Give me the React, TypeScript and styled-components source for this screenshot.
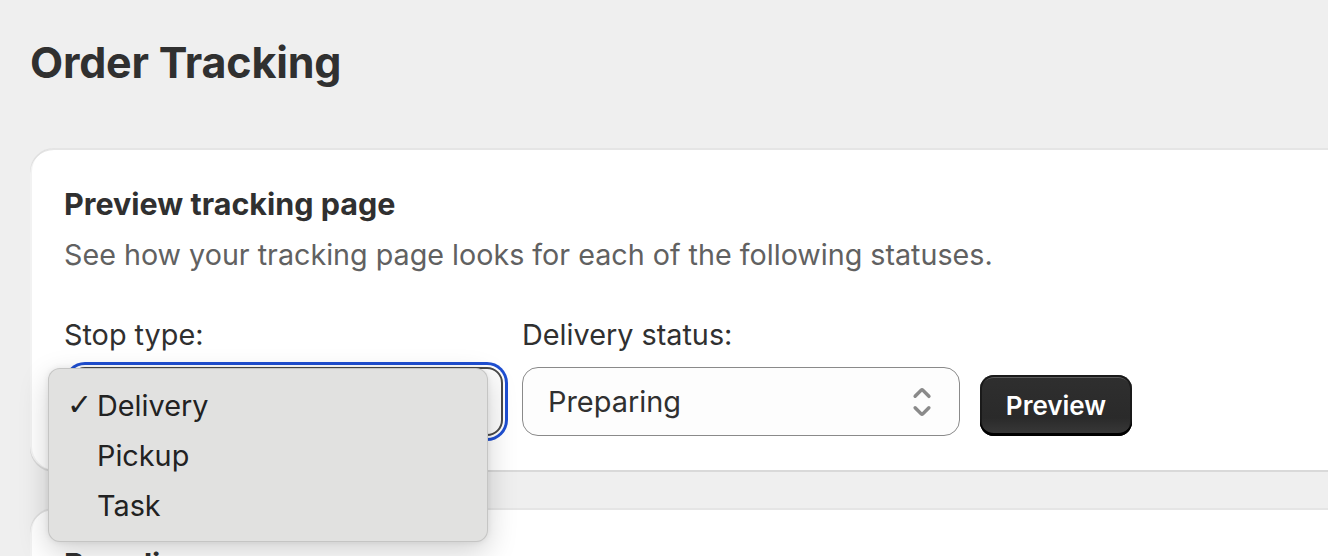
import styled, { createGlobalStyle } from "styled-components";

const GlobalStyle = createGlobalStyle`
  html, body {
    margin: 0;
    padding: 0;
    background: #efefef;
    overflow: hidden;
  }

  body {
    font-family: Inter, "Liberation Sans", sans-serif;
    color: #303030;
  }
`;

function SelectIcon() {
  return (
    <svg width="46" height="46" viewBox="0 0 20 20" fill="#8a8a8a">
      <path d="M10.884 4.323a1.25 1.25 0 0 0-1.768 0l-2.646 2.647a.75.75 0 0 0 1.06 1.06l2.47-2.47 2.47 2.47a.75.75 0 1 0 1.06-1.06l-2.646-2.647Z" />
      <path d="m13.53 13.03-2.646 2.647a1.25 1.25 0 0 1-1.768 0l-2.646-2.647a.75.75 0 0 1 1.06-1.06l2.47 2.47 2.47-2.47a.75.75 0 0 1 1.06 1.06Z" />
    </svg>
  );
}

function App() {
  return (
    <Page>
      <GlobalStyle />
      <Title>Order Tracking</Title>

      <Card>
        <CardTitle>Preview tracking page</CardTitle>
        <CardText>
          See how your tracking page looks for each of the following statuses.
        </CardText>

        <FieldRow>
          <Field $width={444}>
            <Label>Stop type:</Label>
            <SelectWrap>
              <SelectBox $focused>
                <span>Delivery</span>
                <SelectIcon />
              </SelectBox>

              <Menu>
                <MenuItem>
                  <Check>✓</Check>
                  Delivery
                </MenuItem>
                <MenuItem>
                  <Check />
                  Pickup
                </MenuItem>
                <MenuItem>
                  <Check />
                  Task
                </MenuItem>
              </Menu>
            </SelectWrap>
          </Field>

          <Field $width={438}>
            <Label>Delivery status:</Label>
            <SelectWrap>
              <SelectBox>
                <span>Preparing</span>
                <SelectIcon />
              </SelectBox>
            </SelectWrap>
          </Field>

          <PrimaryButton>Preview</PrimaryButton>
        </FieldRow>
      </Card>

      <Card $gap>
        <CardTitle>Branding</CardTitle>
      </Card>
    </Page>
  );
}

export default App;

const Page = styled.div`
  width: 1420px;
  padding: 34px 0 40px 30px;
`;

const Title = styled.h1`
  margin: 0 0 58px;
  font-size: 43px;
  line-height: 56px;
  font-weight: 700;
  letter-spacing: -0.2px;
  color: #303030;
`;

const Card = styled.section<{ $gap?: boolean }>`
  position: relative;
  margin-top: ${(p) => (p.$gap ? "38px" : "0")};
  background: #ffffff;
  border-radius: 24px;
  padding: 36px 34px 34px;
  box-shadow: 0 2px 0 0 rgba(26, 26, 26, 0.1),
    inset 0 2px 0 0 rgba(204, 204, 204, 0.5),
    inset 2px 0 0 0 rgba(0, 0, 0, 0.05);
  z-index: ${(p) => (p.$gap ? 0 : 1)};
`;

const CardTitle = styled.h2`
  margin: 0;
  font-size: 30.5px;
  line-height: 40px;
  font-weight: 700;
  color: #303030;
`;

const CardText = styled.p`
  margin: 11px 0 0;
  font-size: 28.7px;
  line-height: 40px;
  color: #616161;
`;

const FieldRow = styled.div`
  display: flex;
  align-items: flex-end;
  gap: 14px;
  margin-top: 40px;
`;

const Field = styled.div<{ $width: number }>`
  width: ${(p) => p.$width}px;
  display: flex;
  flex-direction: column;
  gap: 12px;
`;

const Label = styled.label`
  font-size: 28.8px;
  line-height: 40px;
  color: #303030;
`;

const SelectWrap = styled.div`
  position: relative;
`;

const SelectBox = styled.div<{ $focused?: boolean }>`
  height: 69px;
  box-sizing: border-box;
  margin: ${(p) => (p.$focused ? "0 5px" : "0")};
  display: flex;
  align-items: center;
  justify-content: space-between;
  padding: 0 14px 0 25px;
  border-radius: 16px;
  background: #fdfdfd;
  border: ${(p) => (p.$focused ? "2px solid #4a4a4a" : "1px solid #8a8a8a")};
  box-shadow: ${(p) =>
    p.$focused ? "0 0 0 2px #ffffff, 0 0 0 5px #1f4fd1" : "none"};
  font-size: 28.9px;
  color: #303030;
`;

const Menu = styled.div`
  position: absolute;
  top: 1px;
  left: -16px;
  width: 440px;
  box-sizing: border-box;
  padding: 11px 0 11px;
  background: #e1e1e0;
  border: 1px solid rgba(0, 0, 0, 0.12);
  border-radius: 12px;
  box-shadow: 0 10px 30px rgba(0, 0, 0, 0.18), 0 0 6px rgba(0, 0, 0, 0.08);
  z-index: 10;
`;

const MenuItem = styled.div`
  display: flex;
  align-items: center;
  height: 50px;
  padding-left: 18px;
  font-size: 28.8px;
  color: #222222;
`;

const Check = styled.span`
  width: 30px;
  font-family: "DejaVu Sans", sans-serif;
  font-size: 30px;
  font-weight: 700;
  line-height: 1;
`;

const PrimaryButton = styled.button`
  width: 152px;
  height: 61px;
  margin-left: 6px;
  border: none;
  border-radius: 14px;
  background: linear-gradient(#2f2f2f, #2a2a2a 70%, #3a3a3a);
  box-shadow: inset 0 -3px 0 0 #000000, inset 0 0 0 2px #1a1a1a,
    inset 0 3px 0 0 rgba(255, 255, 255, 0.22);
  color: #ffffff;
  font-family: Inter, "Liberation Sans", sans-serif;
  font-size: 26px;
  font-weight: 600;
`;
